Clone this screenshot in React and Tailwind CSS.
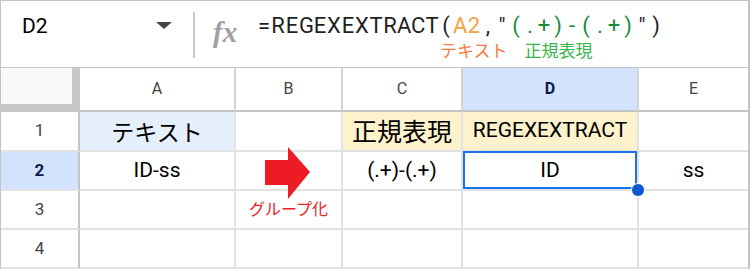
const FORMULA = [
  ...Array.from("=REGEXEXTRACT(").map((c) => ({ c, color: "text-[#1f1f1f]" })),
  { c: "A", color: "text-[#f5a042]" },
  { c: "2", color: "text-[#f5a042]" },
  { c: ",", color: "text-[#1f1f1f]" },
  { c: '"', color: "text-[#1f1f1f]" },
  ...Array.from("(.+)-(.+)").map((c) => ({ c, color: "text-[#1b8a3c]" })),
  { c: '"', color: "text-[#1f1f1f]" },
  { c: ")", color: "text-[#1f1f1f]" },
];

const COLS = ["A", "B", "C", "D", "E"];

const cjk = "font-['Noto_Sans_CJK_JP',sans-serif]";

const Cell = ({ className = "", last, children }) => (
  <div
    className={`relative flex items-center justify-center border-b-2 border-[#e2e2e2] ${
      last ? "" : "border-r-2"
    } ${className}`}
  >
    {children}
  </div>
);

const RowHead = ({ active, children }) => (
  <div
    className={`flex items-center justify-center border-b-2 border-r-2 border-b-[#e2e2e2] border-r-[#c4c4c4] text-[17px] ${
      active ? "bg-[#d3e3fd] font-bold text-[#041e49]" : "bg-white text-[#444]"
    }`}
  >
    {children}
  </div>
);

const FormulaBar = () => (
  <div className="flex h-[66px]">
    <div className="flex w-[192px] shrink-0 items-start justify-between pl-[21px] pr-[21px] pt-[11px]">
      <span className="text-[21px] leading-[28px] text-black">D2</span>
      <svg width="16" height="8" className="mt-[10px]" viewBox="0 0 16 8">
        <polygon points="0,0 16,0 8,7" fill="#444" />
      </svg>
    </div>
    <div className="mt-[11px] h-[46px] w-[2px] shrink-0 bg-[#c8c8c8]" />
    <div className="w-[62px] shrink-0 pl-[18px] pt-[17px]">
      <span className="font-['Liberation_Serif',serif] text-[29px] font-bold italic leading-[28px] text-[#a0a0a0]">
        fx
      </span>
    </div>
    <div className="flex shrink-0 flex-col pt-[11px]">
      <div className="grid h-[28px] grid-cols-[repeat(29,14px)] text-[22px] leading-[28px]">
        {FORMULA.map((ch, i) => (
          <span key={i} className={`text-center ${ch.color}`}>
            {ch.c}
          </span>
        ))}
      </div>
      <div className={`flex h-[20px] text-[17px] leading-[20px] ${cjk}`}>
        <span className="ml-[183px] text-[#f77b3f]">テキスト</span>
        <span className="ml-[17px] text-[#38b54a]">正規表現</span>
      </div>
    </div>
  </div>
);

const App = () => {
  return (
    <div className="h-[271px] w-[753px] overflow-hidden bg-white font-['Roboto',sans-serif]">
      <div className="w-[750px] border-l border-r-2 border-t border-[#c4c4c4]">
        <FormulaBar />
        <div className="relative grid grid-cols-[79px_156px_107px_120px_176px_109px] grid-rows-[44px_40px_39px_39px_39px] border-t border-[#c4c4c4]">
          {/* header row */}
          <div className="border-b-[8px] border-r-[8px] border-[#c7c7c7] bg-[#f8f9fa]" />
          {COLS.map((c, i) => (
            <div
              key={c}
              className={`flex items-center justify-center border-b-2 border-b-[#c4c4c4] border-r-[#d4d4d4] text-[16px] ${
                i < 4 ? "border-r-2" : ""
              } ${c === "D" ? "bg-[#d3e3fd] font-bold text-[#041e49]" : "bg-white text-[#444]"}`}
            >
              {c}
            </div>
          ))}

          {/* row 1 */}
          <RowHead>1</RowHead>
          <Cell className={`bg-[#e5f0fc] text-[23px] text-black ${cjk}`}>テキスト</Cell>
          <Cell />
          <Cell className={`bg-[#fef2cc] text-[25px] text-black ${cjk}`}>正規表現</Cell>
          <Cell className="bg-[#fef2cc] text-[21px] text-black">REGEXEXTRACT</Cell>
          <Cell last />

          {/* row 2 */}
          <RowHead active>2</RowHead>
          <Cell className="text-[21px] text-black">ID-ss</Cell>
          <Cell />
          <Cell className="text-[21px] text-black">(.+)-(.+)</Cell>
          <Cell className="z-10 text-[21px] text-black">
            ID
            <div className="absolute bottom-0 left-0 right-0 top-[-1px] border-2 border-[#1a73e8]" />
            <div className="absolute bottom-[-8px] right-[-8px] h-[14px] w-[14px] rounded-full border border-white bg-[#0b57d0]" />
          </Cell>
          <Cell last className="text-[21px] text-black">ss</Cell>

          {/* row 3 */}
          <RowHead>3</RowHead>
          <Cell />
          <Cell className={`pb-[4px] text-[16px] text-[#e8202a] ${cjk}`}>グループ化</Cell>
          <Cell />
          <Cell />
          <Cell last />

          {/* row 4 */}
          <RowHead>4</RowHead>
          <Cell />
          <Cell />
          <Cell />
          <Cell />
          <Cell last />

          <svg
            className="absolute left-[264px] top-[79px]"
            width="46"
            height="53"
            viewBox="0 0 46 53"
          >
            <polygon points="0,13 23,13 23,0 45,25 23,52 23,38 0,38" fill="#ed1c24" />
          </svg>
        </div>
      </div>
    </div>
  );
};

export default App;
